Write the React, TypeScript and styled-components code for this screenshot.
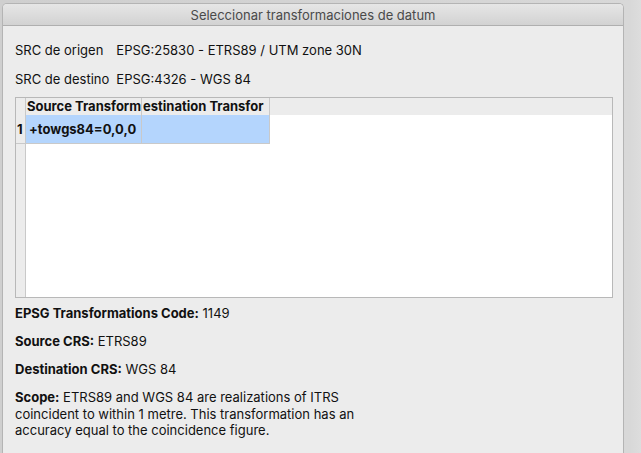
import React from 'react';
import styled, { createGlobalStyle } from 'styled-components';

const GlobalStyle = createGlobalStyle`
  html, body {
    margin: 0;
    padding: 0;
    height: 100%;
    overflow: hidden;
    background: #d6d6d6;
  }
  body {
    font-family: Inter, "Liberation Sans", Arial, sans-serif;
    color: #111;
  }
`;

const Desktop = styled.div`
  width: 641px;
  height: 453px;
  padding: 3px 0 0 2px;
  box-sizing: border-box;
  background: linear-gradient(to right, #cfcfcf 0, #d8d8d8 630px, #dddddd 100%);
  overflow: hidden;
`;

const Window = styled.div`
  width: 622px;
  height: 470px;
  background: #ececec;
  border: 1px solid #b4b4b4;
  border-bottom: none;
  border-radius: 5px 5px 0 0;
  box-sizing: border-box;
  display: flex;
  flex-direction: column;
  overflow: hidden;
`;

const TitleBar = styled.div`
  height: 21px;
  flex: none;
  display: flex;
  align-items: center;
  justify-content: center;
  background: linear-gradient(to bottom, #e6e6e6, #d2d2d2);
  border-bottom: 1px solid #afafaf;
  font-size: 13px;
  color: #4a4a4a;
`;

const Content = styled.div`
  padding: 16px 10px 0 12px;
  display: flex;
  flex-direction: column;
`;

const CrsGrid = styled.div`
  display: grid;
  grid-template-columns: auto 1fr;
  column-gap: 7px;
  row-gap: 13px;
  font-size: 13px;
  line-height: 16px;
  margin-bottom: 10px;
`;

const Table = styled.div`
  height: 201px;
  border: 1px solid #b8b8b8;
  background: #fff;
  box-sizing: border-box;
  display: grid;
  grid-template-columns: 10px 116px 128px 1fr;
  grid-template-rows: 17px 29px 1fr;
`;

const HeaderCell = styled.div<{ last?: boolean }>`
  background: #ececec;
  border-right: ${p => (p.last ? 'none' : '1px solid #c9c9c9')};
  font-size: 13px;
  font-weight: 700;
  line-height: 17px;
  white-space: nowrap;
  overflow: hidden;
  padding-left: 1px;
`;

const RowHeader = styled.div<{ empty?: boolean }>`
  background: #ececec;
  border-right: 1px solid #c9c9c9;
  border-bottom: ${p => (p.empty ? 'none' : '1px solid #c9c9c9')};
  font-size: 13px;
  font-weight: 700;
  display: flex;
  align-items: center;
  padding-left: 1px;
`;

const Cell = styled.div<{ selected?: boolean }>`
  background: ${p => (p.selected ? '#b4d5fd' : '#fff')};
  border-right: 1px solid #c9c9c9;
  border-bottom: 1px solid #c9c9c9;
  font-size: 13px;
  font-weight: 700;
  display: flex;
  align-items: center;
  padding-left: 3px;
  white-space: nowrap;
  overflow: hidden;
`;

const Filler = styled.div`
  background: #fff;
`;

const Details = styled.div`
  margin-top: 7px;
  display: flex;
  flex-direction: column;
  gap: 12px;
  font-size: 13px;
  line-height: 16px;
`;

const Para = styled.p`
  margin: 0;
  width: 350px;
  line-height: 16.5px;
`;

const Label = styled.b`
  font-weight: 700;
`;

export default function App() {
  return (
    <>
      <GlobalStyle />
      <Desktop>
        <Window>
          <TitleBar>Seleccionar transformaciones de datum</TitleBar>
          <Content>
            <CrsGrid>
              <span>SRC de origen</span>
              <span>EPSG:25830 - ETRS89 / UTM zone 30N</span>
              <span>SRC de destino</span>
              <span>EPSG:4326 - WGS 84</span>
            </CrsGrid>
            <Table>
              <HeaderCell />
              <HeaderCell>Source Transform</HeaderCell>
              <HeaderCell>estination Transfor</HeaderCell>
              <HeaderCell last />
              <RowHeader>1</RowHeader>
              <Cell selected>+towgs84=0,0,0</Cell>
              <Cell selected />
              <Filler />
              <RowHeader empty />
              <Filler />
              <Filler />
              <Filler />
            </Table>
            <Details>
              <div>
                <Label>EPSG Transformations Code:</Label> 1149
              </div>
              <div>
                <Label>Source CRS:</Label> ETRS89
              </div>
              <div>
                <Label>Destination CRS:</Label> WGS 84
              </div>
              <Para>
                <Label>Scope:</Label> ETRS89 and WGS 84 are realizations of ITRS coincident to
                within 1 metre. This transformation has an accuracy equal to the coincidence
                figure.
              </Para>
              <div>
                <Label>Preferred transformation:</Label>
              </div>
            </Details>
          </Content>
        </Window>
      </Desktop>
    </>
  );
}
